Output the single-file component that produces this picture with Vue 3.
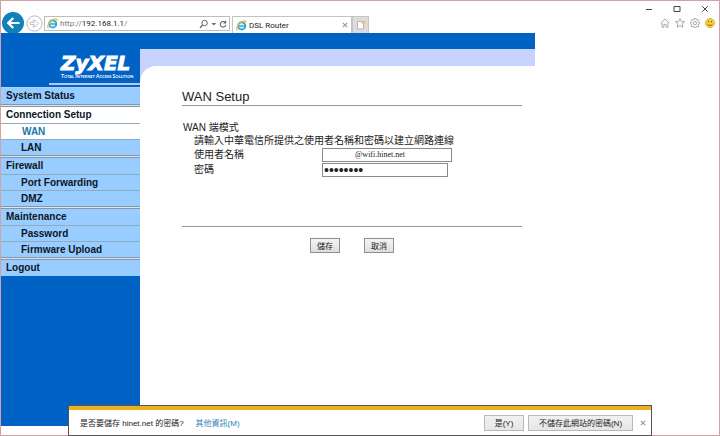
<script setup>
import { ref } from 'vue'

const address = ref('http://192.168.1.1/')
const username = ref('@wifi.hinet.net')
const password = ref('password')

const menu = [
  { label: 'System Status', items: [] },
  { label: 'Connection Setup', open: true, items: [{ label: 'WAN', active: true }, { label: 'LAN' }] },
  { label: 'Firewall', items: [{ label: 'Port Forwarding' }, { label: 'DMZ' }] },
  { label: 'Maintenance', items: [{ label: 'Password' }, { label: 'Firmware Upload' }] },
  { label: 'Logout', items: [] },
]
</script>

<template>
  <div class="window">
    <header class="chrome">
      <div class="caption">
        <button type="button" aria-label="Minimize">
          <svg width="8" height="8" viewBox="0 0 8 8"><path d="M1 4.5h6" /></svg>
        </button>
        <button type="button" aria-label="Maximize">
          <svg width="8" height="8" viewBox="0 0 8 8"><path d="M1 1.5h6v5H1z" /></svg>
        </button>
        <button type="button" aria-label="Close">
          <svg width="8" height="8" viewBox="0 0 8 8"><path d="M1.2 1.2l5.6 5.6M6.8 1.2L1.2 6.8" /></svg>
        </button>
      </div>
      <div class="toolbar">
        <button type="button" class="back" aria-label="Back">
          <svg width="22" height="22" viewBox="0 0 22 22">
            <circle cx="11" cy="11" r="11" fill="#1082b8" />
            <path d="M17.5 11H6.5M11.3 6L6.2 11l5.1 5" fill="none" stroke="#fff" stroke-width="2.2" />
          </svg>
        </button>
        <button type="button" class="forward" aria-label="Forward">
          <svg width="17" height="17" viewBox="0 0 17 17">
            <circle cx="8.5" cy="8.5" r="7.6" fill="#fff" stroke="#b9b9b9" />
            <path d="M4 7.4h4.6L6.8 5.2h2.4l3.3 3.3-3.3 3.3H6.8l1.8-2.2H4z" fill="#fff" stroke="#b9b9b9" stroke-width=".9" />
          </svg>
        </button>
        <div class="address">
          <svg class="ie" width="11" height="11" viewBox="0 0 11 11">
            <circle cx="5.7" cy="5.9" r="3.6" fill="#d9f2fb" stroke="#2fa5d8" stroke-width="1.9" />
            <path d="M3 6h6" stroke="#2fa5d8" stroke-width="1.4" />
            <path d="M1.6 10.2C-.8 9.4 2 4.2 5.5 2 8 .4 10.6.2 9.9 2.9" fill="none" stroke="#e9bd3a" stroke-width="1.2" />
          </svg>
          <label class="address-field">
            <input v-model="address" type="text" aria-label="Address" />
            <span class="address-text" aria-hidden="true"><i>http://</i>192.168.1.1<i>/</i></span>
          </label>
          <button type="button" aria-label="Search">
            <svg width="18" height="10" viewBox="0 0 18 10" fill="none" stroke="#666">
              <circle cx="5.6" cy="4" r="2.7" />
              <path d="M3.7 6L1 8.8" stroke-width="1.3" />
              <path d="M12.5 4h4.6l-2.3 2.4z" fill="#666" stroke="none" />
            </svg>
          </button>
          <button type="button" aria-label="Refresh">
            <svg width="8" height="10" viewBox="0 0 8 10" fill="none" stroke="#666">
              <path d="M6.3 3.6A2.8 2.8 0 1 0 6.8 6" stroke-width="1.1" />
              <path d="M7.2 1.2v3.2H4z" fill="#666" stroke="none" />
            </svg>
          </button>
        </div>
        <div class="tab">
          <svg class="ie" width="11" height="11" viewBox="0 0 11 11">
            <circle cx="5.7" cy="5.9" r="3.6" fill="#d9f2fb" stroke="#2fa5d8" stroke-width="1.9" />
            <path d="M3 6h6" stroke="#2fa5d8" stroke-width="1.4" />
            <path d="M1.6 10.2C-.8 9.4 2 4.2 5.5 2 8 .4 10.6.2 9.9 2.9" fill="none" stroke="#e9bd3a" stroke-width="1.2" />
          </svg>
          <span>DSL Router</span>
          <button type="button" aria-label="Close tab">
            <svg width="6" height="6" viewBox="0 0 6 6"><path d="M.8.8l4.4 4.4M5.2.8L.8 5.2" stroke="#999" stroke-width="1.1" /></svg>
          </button>
        </div>
        <button type="button" class="newtab" aria-label="New tab">
          <svg width="10" height="10" viewBox="0 0 10 10">
            <path d="M1.5 1.5h6v7.5h-6z" fill="#fff" stroke="#aaa" stroke-width=".8" />
            <circle cx="7.4" cy="2.2" r="1.9" fill="#efc071" />
          </svg>
        </button>
        <div class="tools">
          <button type="button" aria-label="Home">
            <svg width="10" height="10" viewBox="0 0 10 10"><path d="M.7 5.2L5 1l4.3 4.2M2 4.6v4.6h1.9V6.3h2.2v2.9H8V4.6" /></svg>
          </button>
          <button type="button" aria-label="Favorites">
            <svg width="10" height="10" viewBox="0 0 10 10"><path d="M5 .5l1.3 3 3.3.3-2.5 2.1.8 3.4L5 7.6 2.1 9.3l.8-3.4L.4 3.8l3.3-.3z" /></svg>
          </button>
          <button type="button" aria-label="Settings">
            <svg width="10" height="10" viewBox="0 0 10 10"><path d="M4 1.7l.2-1.2h1.6L6 1.7l1 .4 1-.7L9 2.5l-.7 1 .3.9 1 .2v1.2l-1 .2-.3.9.7 1L8 9l-1-.7-1 .4-.2 1H4.2l-.2-1-1-.4L2 9 1 7.900l.7-1-.3-.9-1-.2V4.600l1-.2.3-.9-.7-1L2 1.400l1 .7z" /><circle cx="5" cy="5.200" r="1.600" /></svg>
          </button>
          <button type="button" aria-label="Feedback">
            <svg width="10" height="10" viewBox="0 0 10 10">
              <circle cx="5" cy="5" r="4.500" />
              <path d="M3.600 2.800v1.600M6.400 2.800v1.600M2.500 6.200c1.200 1.600 3.800 1.600 5 0" />
            </svg>
          </button>
        </div>
      </div>
    </header>

    <div class="site">
      <div class="topband"></div>
      <div class="frames">
        <aside class="sidebar">
          <div class="brand">
            <strong>ZyXEL</strong>
            <span>Total Internet Access Solution</span>
          </div>
          <nav>
            <section v-for="group in menu" :key="group.label">
              <a href="#" class="head" :class="{ open: group.open }">{{ group.label }}</a>
              <a v-for="item in group.items" :key="item.label" href="#" class="item" :class="{ active: item.active }">{{ item.label }}</a>
            </section>
          </nav>
        </aside>

        <main>
          <div class="banner"><div class="curve"></div></div>
          <form class="content" @submit.prevent>
            <h1>WAN Setup</h1>
            <fieldset>
              <legend>WAN 端模式</legend>
              <p>請輸入中華電信所提供之使用者名稱和密碼以建立網路連線</p>
              <div class="field">
                <label for="user">使用者名稱</label>
                <input id="user" v-model="username" class="user" type="text" />
              </div>
              <div class="field">
                <label for="pass">密碼</label>
                <input id="pass" v-model="password" class="pass" type="password" />
              </div>
            </fieldset>
            <div class="actions">
              <button type="submit">儲存</button>
              <button type="reset">取消</button>
            </div>
          </form>
        </main>
      </div>
    </div>

    <div class="notice" role="alert">
      <span>是否要儲存 hinet.net 的密碼?</span>
      <a href="#">其他資訊(M)</a>
      <div class="choices">
        <button type="button" class="choice">是(Y)</button>
        <button type="button" class="choice wide">不儲存此網站的密碼(N)</button>
        <button type="button" class="dismiss" aria-label="Close">
          <svg width="6" height="6" viewBox="0 0 6 6"><path d="M.8.8l4.4 4.4M5.2.8L.8 5.2" stroke="#999" stroke-width="1.1" /></svg>
        </button>
      </div>
    </div>
  </div>
</template>

<style>
body {
  margin: 0;
  background: #fff;
}
</style>

<style scoped>
.window {
  box-sizing: border-box;
  min-height: 100vh;
  display: flex;
  flex-direction: column;
  border: 1px solid #d3a0a8;
  background: #fefefe;
  color: #222;
  font-family: "Liberation Sans", "Noto Sans CJK TC", sans-serif;
  font-size: 10px;
}
* {
  box-sizing: border-box;
}
button,
input {
  margin: 0;
  padding: 0;
  border: 0;
  background: none;
  font-family: inherit;
  color: inherit;
  outline: none;
}
button {
  display: flex;
  align-items: center;
  justify-content: center;
}
svg {
  display: block;
  flex: none;
}
a {
  text-decoration: none;
}

/* browser chrome */
.chrome {
  height: 32px;
  display: flex;
  flex-direction: column;
  font-family: Roboto, "Noto Sans CJK TC", sans-serif;
  font-size: 8px;
}
.caption {
  height: 14px;
  display: flex;
  justify-content: flex-end;
  align-items: flex-start;
  gap: 20px;
  padding: 4px 10px 0 0;
}
.caption path {
  fill: none;
  stroke: #444;
}
.toolbar {
  height: 18px;
  display: flex;
  align-items: flex-end;
}
.back {
  align-self: flex-start;
  margin: -3px 2px 0 1px;
  height: 21px;
  overflow: hidden;
  align-items: flex-start;
}
.forward {
  margin: 0 1px 1px 0;
}
.address {
  width: 186px;
  height: 15px;
  margin: 0 2px 2px 0;
  padding: 0 2px;
  display: flex;
  align-items: center;
  gap: 2px;
  border: 1px solid #bcbcbc;
  background: #fff;
}
.address-field {
  flex: 1;
  display: grid;
  align-items: center;
  line-height: 12px;
}
.address-field input,
.address-text {
  grid-area: 1 / 1;
  width: 100%;
  font-size: 8px;
}
.address-field input {
  color: transparent;
  caret-color: #222;
}
.address-text {
  pointer-events: none;
}
.address-text i {
  font-style: normal;
  color: #777;
}
.tab {
  width: 120px;
  height: 17px;
  padding: 0 3px;
  display: flex;
  align-items: center;
  gap: 2px;
  border: 1px solid #c4c4c4;
  border-bottom: 0;
  background: #fff;
}
.tab span {
  flex: 1;
}
.newtab {
  width: 17px;
  height: 17px;
  border: 1px solid #c4c4c4;
  border-bottom: 0;
  background: #dcdcdc;
}
.tools {
  flex: 1;
  align-self: flex-start;
  display: flex;
  justify-content: flex-end;
  gap: 5px;
  padding: 3px 4px 0 0;
}
.tools path,
.tools circle {
  fill: none;
  stroke: #a2a2a2;
  stroke-width: 0.9;
}
.tools button:last-child circle {
  fill: #fbd23a;
  stroke: #d9ae35;
}
.tools button:last-child path {
  stroke: #6d5a1c;
}

/* router pages */
.site {
  flex: 1;
  display: flex;
  flex-direction: column;
  padding-bottom: 9px;
}
.topband {
  height: 16px;
  width: 100%;
  max-width: 534px;
  background: #0062c4;
}
.frames {
  flex: 1;
  display: grid;
  grid-template-columns: 139px minmax(0, 1fr);
}
.sidebar {
  background: #0062c4;
}
.brand {
  height: 36px;
  margin: 0 0 2px 48px;
  padding: 5px 0 0 12px;
  display: flex;
  flex-direction: column;
  border-bottom: 2px solid #b9c8f2;
  color: #fff;
}
.brand strong {
  font: italic bold 20px/19px "DejaVu Sans", sans-serif;
  -webkit-text-stroke: 1px #fff;
}
.brand span {
  font: bold 5px/7px Lato, "Liberation Sans", sans-serif;
  font-variant: small-caps;
  white-space: nowrap;
}
nav {
  border-top: 1px solid #a9d6ff;
}
nav section {
  background: #d5e6f5;
}
nav section + section {
  border-top: 3px double #8796a4;
}
nav a {
  display: block;
  height: 16px;
  background: #99ccff;
  color: #0b1626;
  font-weight: bold;
  line-height: 16px;
}
.head {
  padding-left: 5px;
}
.head.open {
  background: #fff;
}
.item {
  padding-left: 20px;
  border-top: 1px solid #8fabc4;
}
.item.active {
  padding-left: 21px;
  background: #fff;
  color: #1878a8;
}
.banner {
  max-width: 395px;
  padding-top: 17px;
  background: #c6d3ff;
}
.curve {
  height: 17px;
  border-top-left-radius: 16px;
  background: #fefefe;
}
.content {
  max-width: 382px;
  padding-left: 42px;
}
h1 {
  margin: 0;
  padding: 5px 0 0;
  height: 23px;
  border-bottom: 1px solid #999;
  font-size: 13px;
  font-weight: normal;
  line-height: 17px;
}
fieldset {
  margin: 0;
  padding: 0 0 49px 12px;
  border: 0;
  border-bottom: 1px solid #999;
}
legend {
  margin-left: -12px;
  padding: 16px 0 0 1px;
  line-height: 12px;
}
p {
  margin: 0;
  line-height: 13px;
  white-space: nowrap;
}
.field {
  height: 15px;
  display: grid;
  grid-template-columns: 128px 1fr;
  align-items: center;
  line-height: 15px;
}
.field input {
  height: 14px;
  border: 1px solid #8a8a8a;
  background: #fff;
}
.field .user {
  width: 130px;
  padding-left: 32px;
  font-family: "Liberation Serif", serif;
  font-size: 8px;
}
.field .pass {
  width: 126px;
  padding-left: 1px;
  font-size: 14px;
}
.actions {
  display: flex;
  justify-content: center;
  gap: 24px;
  padding-top: 11px;
}
.actions button {
  width: 30px;
  height: 15px;
  border: 1px solid #8f8f8f;
  background: linear-gradient(#f4f4f4, #dedede);
  font-size: 8px;
}

/* password prompt */
.notice {
  position: fixed;
  left: 68px;
  right: 68px;
  bottom: 0;
  height: 31px;
  padding: 4px 5px 0 11px;
  display: flex;
  align-items: center;
  gap: 12px;
  border: 1px solid #555;
  background: #fff;
  box-shadow: inset 0 4px #ebb11e;
  font-family: "Liberation Sans", "Noto Sans CJK TC", sans-serif;
  font-size: 8px;
  white-space: nowrap;
}
.notice a {
  color: #2b7fb4;
}
.choices {
  flex: 1;
  display: flex;
  justify-content: flex-end;
  gap: 4px;
}
.choice {
  width: 40px;
  height: 16px;
  border: 1px solid #b9b9b9;
  background: linear-gradient(#f1f1f1, #e6e6e6);
  font-size: 8px;
}
.choice.wide {
  width: 105px;
}
.dismiss {
  padding-left: 3px;
}
</style>
